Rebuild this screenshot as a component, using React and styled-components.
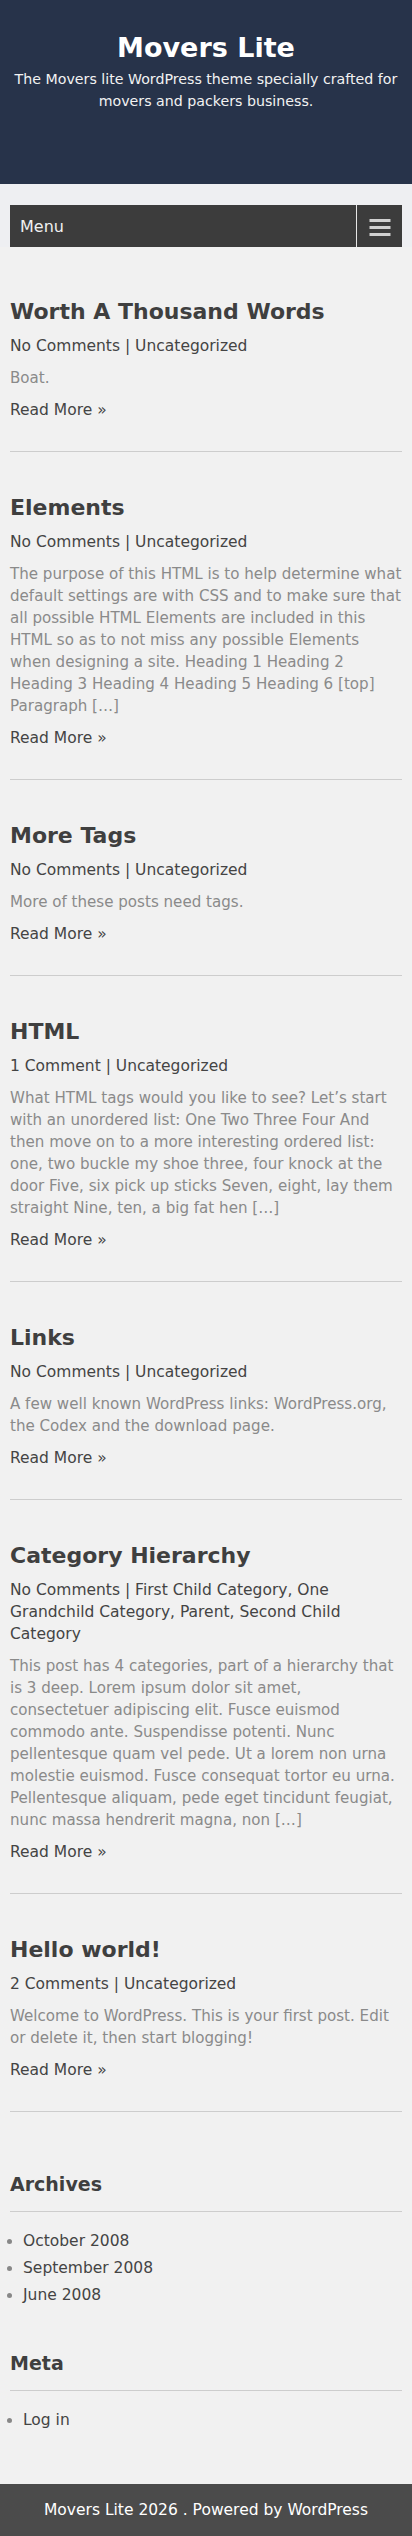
import styled, { createGlobalStyle } from 'styled-components';

const GlobalStyle = createGlobalStyle`
  body {
    margin: 0;
    background: #f1f1f1;
    font-family: "DejaVu Sans", "Liberation Sans", sans-serif;
    color: #444;
  }
  * {
    box-sizing: border-box;
  }
`;

const posts = [
  {
    title: 'Worth A Thousand Words',
    comments: 'No Comments',
    cats: 'Uncategorized',
    excerpt: 'Boat.',
  },
  {
    title: 'Elements',
    comments: 'No Comments',
    cats: 'Uncategorized',
    excerpt:
      'The purpose of this HTML is to help determine what default settings are with CSS and to make sure that all possible HTML Elements are included in this HTML so as to not miss any possible Elements when designing a site. Heading 1 Heading 2 Heading 3 Heading 4 Heading 5 Heading 6 [top] Paragraph […]',
  },
  {
    title: 'More Tags',
    comments: 'No Comments',
    cats: 'Uncategorized',
    excerpt: 'More of these posts need tags.',
  },
  {
    title: 'HTML',
    comments: '1 Comment',
    cats: 'Uncategorized',
    excerpt:
      'What HTML tags would you like to see? Let’s start with an unordered list: One Two Three Four And then move on to a more interesting ordered list: one, two buckle my shoe three, four knock at the door Five, six pick up sticks Seven, eight, lay them straight Nine, ten, a big fat hen […]',
  },
  {
    title: 'Links',
    comments: 'No Comments',
    cats: 'Uncategorized',
    excerpt:
      'A few well known WordPress links: WordPress.org, the Codex and the download page.',
  },
  {
    title: 'Category Hierarchy',
    comments: 'No Comments',
    cats: 'First Child Category, One Grandchild Category, Parent, Second Child Category',
    excerpt:
      'This post has 4 categories, part of a hierarchy that is 3 deep. Lorem ipsum dolor sit amet, consectetuer adipiscing elit. Fusce euismod commodo ante. Suspendisse potenti. Nunc pellentesque quam vel pede. Ut a lorem non urna molestie euismod. Fusce consequat tortor eu urna. Pellentesque aliquam, pede eget tincidunt feugiat, nunc massa hendrerit magna, non […]',
  },
  {
    title: 'Hello world!',
    comments: '2 Comments',
    cats: 'Uncategorized',
    excerpt:
      'Welcome to WordPress. This is your first post. Edit or delete it, then start blogging!',
  },
];

function MenuIcon() {
  return (
    <svg width='22' height='20' viewBox='0 0 22 20'>
      <rect x='0.5' y='3' width='21' height='3' fill='#d0d0d0' />
      <rect x='0.5' y='10' width='21' height='3' fill='#d0d0d0' />
      <rect x='0.5' y='17' width='21' height='3' fill='#d0d0d0' />
    </svg>
  );
}

function App() {
  return (
    <>
      <GlobalStyle />
      <Header>
        <SiteTitle>Movers Lite</SiteTitle>
        <Tagline>
          The Movers lite WordPress theme specially crafted for movers and
          packers business.
        </Tagline>
      </Header>
      <NavWrap>
        <MenuBar>
          <MenuLabel>Menu</MenuLabel>
          <MenuToggle aria-label='menu'>
            <MenuIcon />
          </MenuToggle>
        </MenuBar>
      </NavWrap>
      <Main>
        {posts.map((post) => (
          <Post key={post.title}>
            <PostTitle>{post.title}</PostTitle>
            <PostMeta>
              {post.comments} | {post.cats}
            </PostMeta>
            <Excerpt>{post.excerpt}</Excerpt>
            <ReadMore href='#'>Read More »</ReadMore>
          </Post>
        ))}
        <Widget>
          <WidgetTitle>Archives</WidgetTitle>
          <WidgetList>
            <li>October 2008</li>
            <li>September 2008</li>
            <li>June 2008</li>
          </WidgetList>
        </Widget>
        <Widget>
          <WidgetTitle>Meta</WidgetTitle>
          <WidgetList>
            <li>Log in</li>
          </WidgetList>
        </Widget>
      </Main>
      <Footer>Movers Lite 2026 . Powered by WordPress</Footer>
    </>
  );
}

const Header = styled.header`
  height: 184px;
  background: #27334a;
  color: #fff;
  text-align: center;
  padding: 28px 10px 0;
`;

const SiteTitle = styled.h1`
  margin: 0;
  font-size: 27px;
  line-height: 40px;
  font-weight: bold;
`;

const Tagline = styled.p`
  margin: 0;
  font-size: 14.2px;
  line-height: 22px;
  color: #f2f2f2;
`;

const NavWrap = styled.div`
  background: #eeeff2;
  padding: 21px 10px 0;
`;

const MenuBar = styled.nav`
  display: flex;
  height: 42px;
  background: #3c3c3c;
`;

const MenuLabel = styled.div`
  flex: 1;
  display: flex;
  align-items: center;
  padding-left: 10px;
  font-size: 16px;
  color: #f0f0f0;
  border-right: 1px solid #e6e6e6;
`;

const MenuToggle = styled.button`
  width: 45px;
  padding: 0;
  border: 0;
  background: #3c3c3c;
  display: flex;
  align-items: center;
  justify-content: center;
  cursor: pointer;
`;

const Main = styled.main`
  padding: 9px 10px 50px;
`;

const Post = styled.article`
  padding: 40px 0 30px;
  border-bottom: 1px solid #cdcdcd;
`;

const PostTitle = styled.h2`
  margin: 0 0 8px;
  font-size: 22px;
  line-height: 31px;
  font-weight: bold;
  color: #3f3f3f;
`;

const PostMeta = styled.div`
  margin-bottom: 10px;
  font-size: 15.5px;
  line-height: 22px;
  color: #444;
`;

const Excerpt = styled.p`
  margin: 0 0 10px;
  font-size: 15.1px;
  line-height: 22px;
  color: #8a8a8a;
`;

const ReadMore = styled.a`
  display: block;
  font-size: 15.5px;
  line-height: 22px;
  color: #444;
  text-decoration: none;
`;

const Widget = styled.section`
  padding-top: 58px;
  & + & {
    padding-top: 40px;
  }
`;

const WidgetTitle = styled.h3`
  margin: 0;
  padding-bottom: 13px;
  font-size: 19px;
  line-height: 28px;
  font-weight: bold;
  color: #3f3f3f;
  border-bottom: 1px solid #cdcdcd;
`;

const WidgetList = styled.ul`
  margin: 16px 0 0 -10px;
  padding-left: 23px;
  list-style: disc;
  li {
    font-size: 15.5px;
    line-height: 27px;
    color: #444;
  }
  li::marker {
    color: #888;
  }
`;

const Footer = styled.footer`
  height: 52px;
  background: #4b4b4b;
  color: #fff;
  text-align: center;
  font-size: 15.5px;
  line-height: 52px;
`;

export default App;
